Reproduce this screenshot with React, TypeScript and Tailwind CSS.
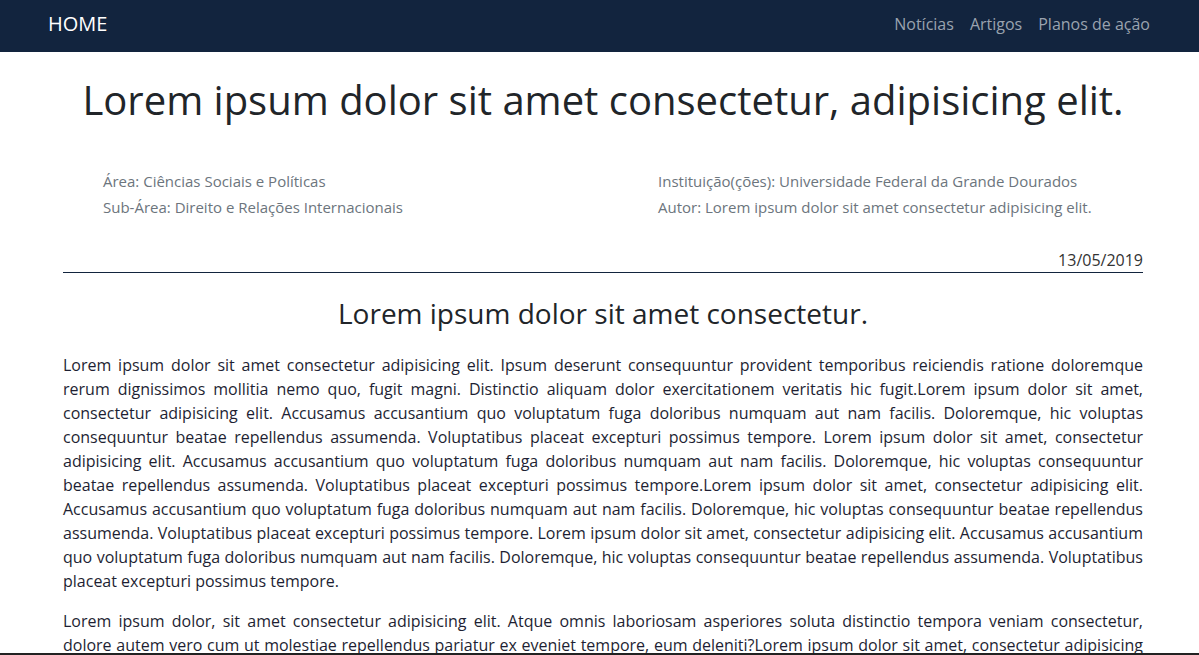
import React from "react";

const p1 =
  "Lorem ipsum dolor sit amet consectetur adipisicing elit. Ipsum deserunt consequuntur provident temporibus reiciendis ratione doloremque rerum dignissimos mollitia nemo quo, fugit magni. Distinctio aliquam dolor exercitationem veritatis hic fugit.Lorem ipsum dolor sit amet, consectetur adipisicing elit. Accusamus accusantium quo voluptatum fuga doloribus numquam aut nam facilis. Doloremque, hic voluptas consequuntur beatae repellendus assumenda. Voluptatibus placeat excepturi possimus tempore. Lorem ipsum dolor sit amet, consectetur adipisicing elit. Accusamus accusantium quo voluptatum fuga doloribus numquam aut nam facilis. Doloremque, hic voluptas consequuntur beatae repellendus assumenda. Voluptatibus placeat excepturi possimus tempore.Lorem ipsum dolor sit amet, consectetur adipisicing elit. Accusamus accusantium quo voluptatum fuga doloribus numquam aut nam facilis. Doloremque, hic voluptas consequuntur beatae repellendus assumenda. Voluptatibus placeat excepturi possimus tempore. Lorem ipsum dolor sit amet, consectetur adipisicing elit. Accusamus accusantium quo voluptatum fuga doloribus numquam aut nam facilis. Doloremque, hic voluptas consequuntur beatae repellendus assumenda. Voluptatibus placeat excepturi possimus tempore.";

const p2 =
  "Lorem ipsum dolor, sit amet consectetur adipisicing elit. Atque omnis laboriosam asperiores soluta distinctio tempora veniam consectetur, dolore autem vero cum ut molestiae repellendus pariatur ex eveniet tempore, eum deleniti?Lorem ipsum dolor sit amet, consectetur adipisicing elit. Accusamus accusantium quo voluptatum fuga doloribus numquam aut nam facilis. Doloremque, hic voluptas consequuntur beatae repellendus assumenda. Voluptatibus placeat excepturi possimus tempore.";

export default function App() {
  return (
    <div className="min-h-screen bg-white font-['Open_Sans',sans-serif] text-[#212529]">
      <nav className="flex h-[52px] items-center justify-between bg-[#12243e] pb-[4px] pl-[48px] pr-[41px]">
        <a className="text-[20px] leading-[30px] text-white">HOME</a>
        <div className="flex text-[16px] leading-[24px] text-[#9aa3af]">
          <a className="px-[8px]">Notícias</a>
          <a className="px-[8px]">Artigos</a>
          <a className="px-[8px]">Planos de ação</a>
        </div>
      </nav>

      <main className="ml-[63px] w-[1080px]">
        <h1 className="mt-[24px] text-center text-[40px] leading-[48px] font-normal">
          Lorem ipsum dolor sit amet consectetur, adipisicing elit.
        </h1>

        <div className="mt-[44px] flex text-[15px] leading-[26px] text-[#6c757d]">
          <div className="ml-[40px] w-[555px]">
            <p>Área: Ciências Sociais e Políticas</p>
            <p>Sub-Área: Direito e Relações Internacionais</p>
          </div>
          <div>
            <p>Instituição(ções): Universidade Federal da Grande Dourados</p>
            <p>Autor: Lorem ipsum dolor sit amet consectetur adipisicing elit.</p>
          </div>
        </div>

        <div className="mt-[28px] border-b border-[#12243e] text-right text-[16px] leading-[24px] text-[#333]">
          13/05/2019
        </div>

        <h2 className="mt-[23px] text-center text-[28px] leading-[34px] font-normal">
          Lorem ipsum dolor sit amet consectetur.
        </h2>

        <p className="mt-[23px] text-justify text-[16px] leading-[24px] text-[#1e1f33]">{p1}</p>
        <p className="mt-[16px] text-justify text-[16px] leading-[24px] text-[#1e1f33]">{p2}</p>
      </main>

      <div className="fixed bottom-0 left-0 h-[2px] w-full bg-[#222]" />
    </div>
  );
}
